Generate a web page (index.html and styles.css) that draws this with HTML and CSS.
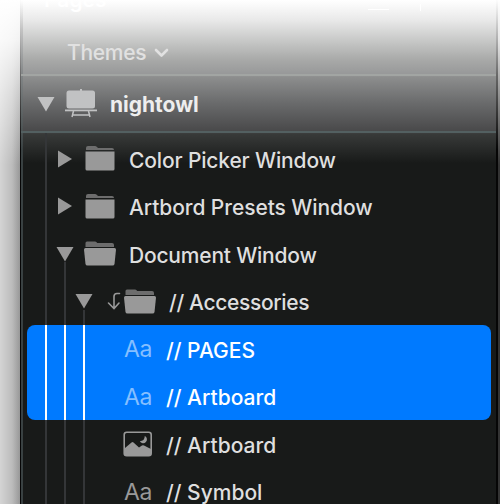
FILE: index.html
```html
<!DOCTYPE html>
<html lang="en">
<head>
<meta charset="utf-8">
<title>Layers</title>
<link rel="stylesheet" href="styles.css">
</head>
<body>
<svg width="0" height="0" class="defs">
  <symbol id="closed" viewBox="0 0 32 28"><path d="M2 5V3q0-2 2-2h7q1 0 2 1l1 1h14q2 0 2 2z" fill="#6d6d6d"/><path d="M1.500 6.500h29V24q0 1.500-1.500 1.500H3Q1.500 25.500 1.500 24z" fill="#999"/></symbol>
  <symbol id="open" viewBox="0 0 32 28"><path d="M1.500 7V3q0-1.500 1.500-1.500h8q1 0 1.600.8l.6.7H28q2 0 2 2v2z" fill="#6d6d6d"/><path d="M1.500 8h29q1.500 0 1.500 1.500L30.500 24q-.2 1.500-2 1.500h-25q-1.800 0-2-1.500L0 9.500Q0 8 1.500 8z" fill="#999"/></symbol>
  <symbol id="down" viewBox="0 0 18 16"><path d="M.5 1h17L9 15.500z" fill="currentColor"/></symbol>
  <symbol id="right" viewBox="0 0 18 18"><path d="M2 .5v17L16 9z" fill="currentColor"/></symbol>
</svg>
<main class="panel">
  <div class="toolbar"><span class="title">Pages</span><i class="dash"></i><i class="plus"></i></div>
  <div class="themes"><span>Themes</span><svg width="15" height="10" viewBox="0 0 15 10"><path d="M2 2l5.500 5.500L13 2" fill="none" stroke="currentColor" stroke-width="2.600" stroke-linecap="round" stroke-linejoin="round"/></svg></div>
  <div class="root">
    <svg class="arrow" width="18" height="16"><use href="#down"/></svg>
    <svg class="easel" width="32" height="29" viewBox="0 0 32 29"><path d="M15 0h2v3h-2z"/><rect x="1.500" y="1.500" width="28.500" height="18" rx="2.500"/><path d="M0 20.500h32v1.800H0z"/><path d="M8.500 22l-1.500 6M23.500 22l1.500 6M8 26h16" fill="none" stroke="currentColor" stroke-width="1.500"/></svg>
    <b>nightowl</b>
  </div>
  <div class="tree">
    <i class="guide g1"></i><i class="guide g2"></i><i class="guide g3"></i>
    <div class="row d1"><svg class="arrow" width="18" height="18"><use href="#right"/></svg><svg class="icon" width="32" height="28"><use href="#closed"/></svg><span class="t1">Color Picker Window</span></div>
    <div class="row d1"><svg class="arrow" width="18" height="18"><use href="#right"/></svg><svg class="icon" width="32" height="28"><use href="#closed"/></svg><span class="t2">Artbord Presets Window</span></div>
    <div class="row d1"><svg class="arrow" width="18" height="16"><use href="#down"/></svg><svg class="icon" width="32" height="28"><use href="#open"/></svg><span class="t3">Document Window</span></div>
    <div class="row d2"><svg class="arrow" width="18" height="16"><use href="#down"/></svg><svg class="clip" width="14" height="18" viewBox="0 0 14 18"><path d="M12.500 1.500H10Q7 1.500 7 4.500V16M1.500 11L7 16.500 12 11" fill="none" stroke="#999" stroke-width="1.600" stroke-linecap="round"/></svg><svg class="icon" width="32" height="28"><use href="#open"/></svg><span class="t4">// Accessories</span></div>
    <div class="selection">
      <div class="row leaf"><span class="aa">Aa</span><span>// PAGES</span></div>
      <div class="row leaf"><span class="aa">Aa</span><span>// Artboard</span></div>
    </div>
    <div class="row leaf"><svg class="image" width="30" height="26" viewBox="0 0 30 26"><rect x="1.200" y="1.200" width="27" height="23.500" rx="2.500" fill="none" stroke="#999" stroke-width="1.600"/><path d="M2 17l6.500-5.500q1-.8 2 0l5.500 5 3-2q1-.6 2 0l7 3.500V24H2z" fill="#999"/><path d="M21.800 5a3.800 3.800 0 1 1-5 5.200q4.800 0 5-5.200z" fill="#999"/></svg><span>// Artboard</span></div>
    <div class="row leaf"><span class="aa">Aa</span><span>// Symbol</span></div>
  </div>
</main>
</body>
</html>
```
FILE: styles.css
```css
* { box-sizing: border-box; }
body {
  margin: 0;
  width: 500px;
  height: 504px;
  overflow: hidden;
  padding: 0 2px 0 20px;
  background:
    linear-gradient(#fff 0, rgba(255,255,255,.88) 40px, rgba(255,255,255,.5) 90px, transparent 165px),
    linear-gradient(90deg, #d4d4d4, #bcbcbc 12px, #989898 20px, #333 22px);
  font: 500 21px/1 Inter, sans-serif;
  color: #dfdfdf;
}
.defs { position: absolute; }
.panel {
  height: 504px;
  overflow: hidden;
  border: 0 solid;
  border-width: 0 2px 0 1px;
  border-image: linear-gradient(#fff, #ccc 25px, #666 77px, #060606 150px) 1;
  background:
    linear-gradient(#fff, #c2c2c2 30px, #808485 77px, #394142 150px) 0 0 / 2px 100% no-repeat,
    linear-gradient(#fff 0, #fafafa 5px, #e9e9e9 20px, #c5c6c5 42px, #a8a9a8 60px, #969798 75px, #8d8e8e 77px, #6b6c6d 102px, #49494a 131px, #383a39 134px, #181a19 163px);
}
.toolbar {
  position: relative;
  height: 27px;
  overflow: hidden;
  color: #fff;
}
.title { display: block; margin: -11px 0 0 23px; font-weight: 600; }
.dash { position: absolute; left: 347px; top: 9px; width: 21px; height: 1px; background: #fff; }
.plus { position: absolute; left: 399px; top: 4px; width: 1px; height: 7px; background: #fff; }
.themes {
  display: flex;
  align-items: center;
  gap: 8px;
  height: 49px;
  padding: 4px 0 0 46px;
  border-bottom: 2px solid #a2a5a3;
  color: #e1e1e1;
  letter-spacing: -.3px;
}
.themes svg { margin-top: 1px; }
.root {
  display: flex;
  align-items: center;
  height: 57px;
  padding-left: 16px;
  border-bottom: 2px solid #536061;
  color: #c1c2c3;
}
.easel { margin: -1px 13px 0 10px; fill: currentColor; }
.root b { padding-top: 2px; color: #eee; font-weight: 700; }
.tree { position: relative; padding-top: 2px; }
.row { position: relative; display: flex; align-items: center; height: 47.5px; white-space: nowrap; }
.row > span { flex: none; padding-top: 3px; }
.arrow { flex: none; color: #999; }
.root .arrow { color: #c1c2c3; }
.d1 { padding-left: 35px; }
.d1 .icon { margin: 0 13px 0 10px; }
.d2 { padding-left: 54px; }
.clip { margin: -1px 3px 0 14px; }
.row .icon { position: relative; top: .5px; }
.d2 .icon { margin-right: 13px; }
.t1 { letter-spacing: -.15px; }
.t2 { letter-spacing: -.08px; }
.t3 { letter-spacing: -.2px; }
.t4 { letter-spacing: -.35px; }
.leaf { padding-left: 103px; }
.row > .aa { width: 42px; padding-top: 2px; font-weight: 400; font-size: 23px; letter-spacing: -.4px; color: #999; }
.image { margin: 1px 13px 0 -1px; }
.selection {
  position: relative;
  margin: 0 5px 0 6px;
  border-radius: 8px;
  background: linear-gradient(90deg, transparent 18px, #fff 18px 20px, transparent 20px 37px, #fff 37px 39px, transparent 39px 56px, #fff 56px 58px, transparent 58px) #007aff;
  color: #fff;
}
.selection .leaf { padding-left: 97px; }
.selection .row > .aa { color: #85bfff; }
.guide { position: absolute; bottom: 0; width: 2px; background: #343638; }
.g1 { left: 24px; top: 0; }
.g2 { left: 43px; top: 129px; }
.g3 { left: 62px; top: 177px; }
```
